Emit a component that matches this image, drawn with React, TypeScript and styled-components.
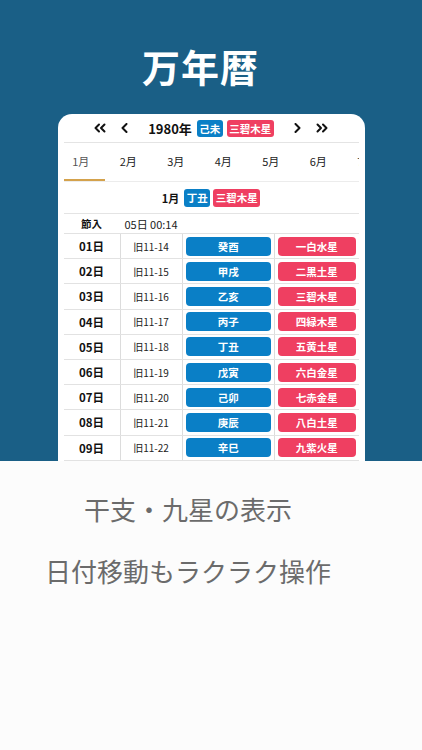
import React from 'react'
import styled, { createGlobalStyle } from 'styled-components'

const BLUE = '#0a7fc6'
const RED = '#ef3f61'

const GlobalStyle = createGlobalStyle`
  html, body {
    margin: 0;
    padding: 0;
    background: #fcfcfc;
  }
  body {
    font-family: "Noto Sans CJK JP", "Noto Sans", sans-serif;
  }
`

const Page = styled.div`
  width: 422px;
  height: 750px;
  display: flex;
  flex-direction: column;
  overflow: hidden;
`

const Hero = styled.section`
  height: 461px;
  flex-shrink: 0;
  background: #1a5f86;
  display: flex;
  flex-direction: column;
  align-items: center;
  overflow: hidden;
`

const Title = styled.h1`
  margin: 0 21px 0 0;
  padding-top: 43px;
  font-size: 38px;
  line-height: 46px;
  font-weight: 700;
  color: #fff;
  letter-spacing: 1px;
`

const Card = styled.div`
  margin-top: 25px;
  width: 307px;
  box-sizing: border-box;
  padding: 0 6px;
  background: #fff;
  border-radius: 14px 14px 0 0;
  flex-shrink: 0;
`

const Nav = styled.div`
  height: 29px;
  box-sizing: border-box;
  border-bottom: 1px solid #e4e4e4;
  display: flex;
  align-items: center;
  justify-content: center;
  gap: 20px;
`

const Group = styled.div<{ $gap: number }>`
  display: flex;
  align-items: center;
  gap: ${(p) => p.$gap}px;
`

const YearText = styled.span`
  font-size: 13px;
  font-weight: 700;
  color: #111;
  margin-right: 1px;
`

const Badge = styled.span<{ $tone: 'blue' | 'red'; $h?: number }>`
  display: inline-flex;
  align-items: center;
  height: ${(p) => p.$h ?? 17}px;
  padding: 0 2.5px;
  border-radius: 3px;
  background: ${(p) => (p.$tone === 'blue' ? BLUE : RED)};
  color: #fff;
  font-size: 10.5px;
  font-weight: 700;
`

const Tabs = styled.div`
  height: 39px;
  box-sizing: border-box;
  border-bottom: 1px solid #ececec;
  overflow: hidden;
`

const TabStrip = styled.div`
  display: flex;
  margin-left: -6.5px;
  height: 38px;
`

const Tab = styled.div<{ $active?: boolean }>`
  flex: 0 0 47.5px;
  height: 38px;
  box-sizing: border-box;
  display: flex;
  align-items: center;
  justify-content: center;
  border-bottom: 2px solid ${(p) => (p.$active ? '#d4a24c' : 'transparent')};
  font-size: 11px;
  color: ${(p) => (p.$active ? '#555' : '#222')};
`

const MonthRow = styled.div`
  height: 32px;
  box-sizing: border-box;
  border-bottom: 1px solid #e4e4e4;
  display: flex;
  align-items: center;
  justify-content: center;
  gap: 3px;
`

const MonthLabel = styled.span`
  font-size: 11px;
  font-weight: 700;
  color: #111;
  margin-right: 2px;
`

const Grid = styled.div<{ $h: number; $lines?: boolean }>`
  display: grid;
  grid-template-columns: 56px 62px 92px 1fr;
  height: ${(p) => p.$h}px;
  box-sizing: border-box;
  border-bottom: 1px solid #e2e2e2;
  & > * + * {
    border-left: 1px solid ${(p) => (p.$lines ? '#dcdcdc' : 'transparent')};
  }
`

const Cell = styled.div<{ $bold?: boolean; $size: number }>`
  display: flex;
  align-items: center;
  justify-content: center;
  font-size: ${(p) => p.$size}px;
  font-weight: ${(p) => (p.$bold ? 700 : 400)};
  color: ${(p) => (p.$bold ? '#111' : '#222')};
  white-space: nowrap;
`

const PillCell = styled.div`
  display: flex;
  align-items: center;
  padding: 0 2.5px 0 3px;
`

const Pill = styled.div<{ $tone: 'blue' | 'red' }>`
  flex: 1;
  height: 19px;
  border-radius: 4px;
  background: ${(p) => (p.$tone === 'blue' ? BLUE : RED)};
  color: #fff;
  font-size: 10.5px;
  font-weight: 700;
  display: flex;
  align-items: center;
  justify-content: center;
`

const Captions = styled.section`
  flex: 1;
  background: #fcfcfc;
  padding: 29px 46px 0 0;
  display: flex;
  flex-direction: column;
  align-items: center;
  gap: 24px;
`

const Caption = styled.p`
  margin: 0;
  font-size: 26px;
  line-height: 38px;
  color: #6b6b6b;
  white-space: nowrap;
`

const Chevron = ({ dir, double }: { dir: 'l' | 'r'; double?: boolean }) => {
  const flip = dir === 'r' ? 'scale(-1,1)' : undefined
  if (double) {
    return (
      <svg width="12" height="10" viewBox="0 0 12 10" style={{ transform: flip }}>
        <g fill="none" stroke="#111" strokeWidth="2" strokeLinecap="round" strokeLinejoin="round">
          <polyline points="5,1.5 1.5,5 5,8.5" />
          <polyline points="10.5,1.5 7,5 10.5,8.5" />
        </g>
      </svg>
    )
  }
  return (
    <svg width="7" height="10" viewBox="0 0 7 10" style={{ transform: flip }}>
      <polyline
        points="5.5,1 1.5,5 5.5,9"
        fill="none"
        stroke="#111"
        strokeWidth="2"
        strokeLinecap="round"
        strokeLinejoin="round"
      />
    </svg>
  )
}

const months = ['1月', '2月', '3月', '4月', '5月', '6月', '7月']

const days = [
  ['01日', '旧11-14', '癸酉', '一白水星'],
  ['02日', '旧11-15', '甲戌', '二黒土星'],
  ['03日', '旧11-16', '乙亥', '三碧木星'],
  ['04日', '旧11-17', '丙子', '四緑木星'],
  ['05日', '旧11-18', '丁丑', '五黄土星'],
  ['06日', '旧11-19', '戊寅', '六白金星'],
  ['07日', '旧11-20', '己卯', '七赤金星'],
  ['08日', '旧11-21', '庚辰', '八白土星'],
  ['09日', '旧11-22', '辛巳', '九紫火星'],
]

const App: React.FC = () => {
  return (
    <Page>
      <GlobalStyle />
      <Hero>
        <Title>万年暦</Title>
        <Card>
          <Nav>
            <Group $gap={15}>
              <Chevron dir="l" double />
              <Chevron dir="l" />
            </Group>
            <Group $gap={4}>
              <YearText>1980年</YearText>
              <Badge $tone="blue">己未</Badge>
              <Badge $tone="red">三碧木星</Badge>
            </Group>
            <Group $gap={15}>
              <Chevron dir="r" />
              <Chevron dir="r" double />
            </Group>
          </Nav>
          <Tabs>
            <TabStrip>
              {months.map((m, i) => (
                <Tab key={m} $active={i === 0}>
                  {m}
                </Tab>
              ))}
            </TabStrip>
          </Tabs>
          <MonthRow>
            <MonthLabel>1月</MonthLabel>
            <Badge $tone="blue" $h={18}>丁丑</Badge>
            <Badge $tone="red" $h={18}>三碧木星</Badge>
          </MonthRow>
          <Grid $h={20}>
            <Cell $bold $size={10.5}>節入</Cell>
            <Cell $size={11}>05日 00:14</Cell>
          </Grid>
          {days.map(([d, old, kanshi, star]) => (
            <Grid key={d} $h={25.2} $lines>
              <Cell $bold $size={11.5}>{d}</Cell>
              <Cell $size={10}>{old}</Cell>
              <PillCell>
                <Pill $tone="blue">{kanshi}</Pill>
              </PillCell>
              <PillCell>
                <Pill $tone="red">{star}</Pill>
              </PillCell>
            </Grid>
          ))}
        </Card>
      </Hero>
      <Captions>
        <Caption>干支・九星の表示</Caption>
        <Caption>日付移動もラクラク操作</Caption>
      </Captions>
    </Page>
  )
}

export default App
